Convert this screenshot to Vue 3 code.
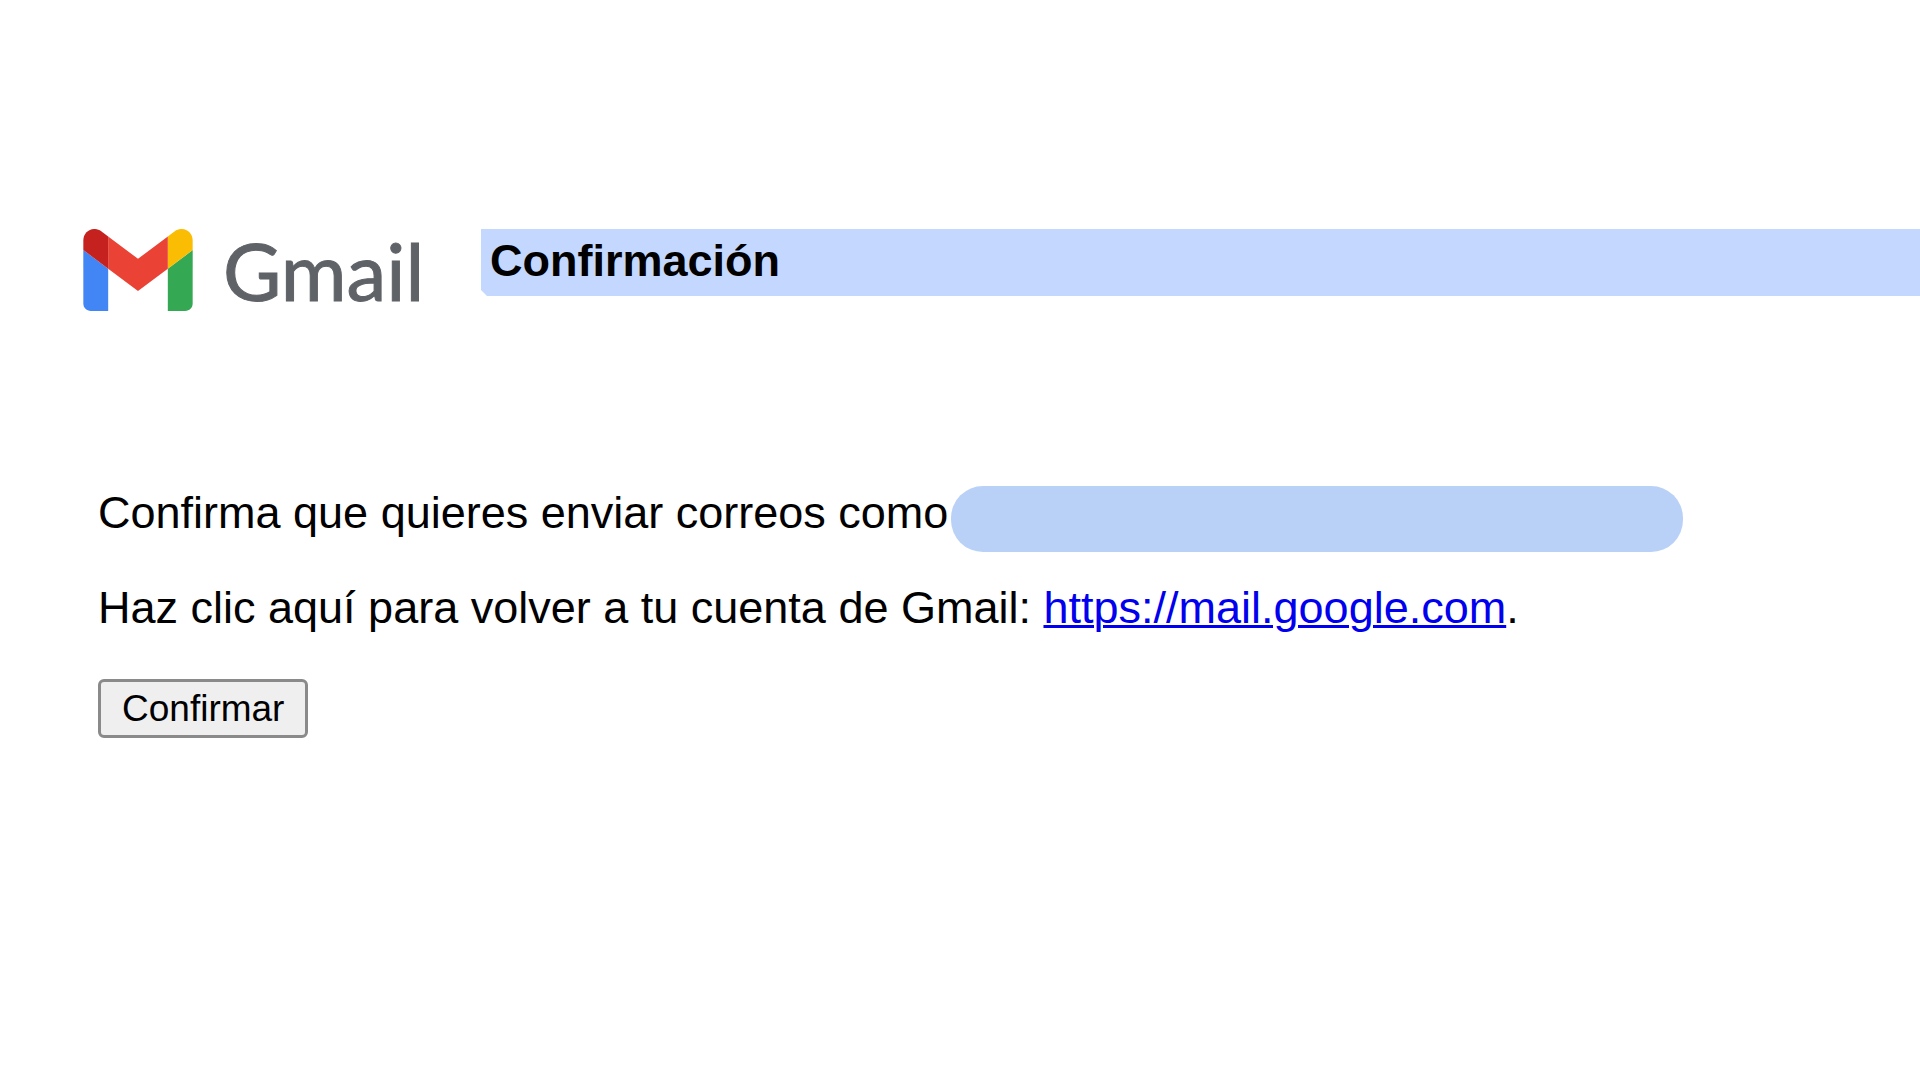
<script setup>
const mailUrl = 'https://mail.google.com'
</script>

<template>
  <main class="page">
    <header class="header">
      <div class="logo">
        <svg class="mark" viewBox="52 42 88 66" aria-hidden="true">
          <path fill="#4285f4" d="M58 108h14V74L52 59v43c0 3.32 2.69 6 6 6" />
          <path fill="#34a853" d="M120 108h14c3.32 0 6-2.69 6-6V59l-20 15" />
          <path fill="#fbbc04" d="M120 48v26l20-15v-8c0-7.42-8.47-11.65-14.4-7.2" />
          <path fill="#ea4335" d="M72 74V48l24 18 24-18v26L96 92" />
          <path fill="#c5221f" d="M52 51v8l20 15V48l-5.6-4.2c-5.94-4.45-14.4-.22-14.4 7.2" />
        </svg>
        <span class="wordmark">Gmail</span>
      </div>
      <h1 class="title">Confirmación</h1>
    </header>

    <form class="content" @submit.prevent>
      <p class="line">
        <span>Confirma que quieres enviar correos como</span>
        <span class="redacted"></span>
      </p>
      <p class="line">
        <span>Haz clic aquí para volver a tu cuenta de Gmail: <a :href="mailUrl">{{ mailUrl }}</a>.</span>
      </p>
      <button class="confirm" type="submit">Confirmar</button>
    </form>
  </main>
</template>

<style>
body {
  margin: 0;
  background: #fff;
}
</style>

<style scoped>
.page {
  padding-top: 229px;
  font-family: "Liberation Sans", Arial, sans-serif;
  font-size: 45px;
  color: #000;
}

.header {
  display: flex;
  align-items: flex-start;
  padding-left: 83px;
}

.logo {
  display: flex;
  flex: none;
  align-items: center;
  gap: 30px;
  width: 398px;
  height: 82px;
}

.mark {
  flex: none;
  width: 110px;
  height: 82px;
}

.wordmark {
  font-family: Lato, sans-serif;
  font-size: 80px;
  line-height: 82px;
  color: #5f6368;
  -webkit-text-stroke: 1px #5f6368;
}

.title {
  flex: 1;
  box-sizing: border-box;
  height: 67px;
  margin: 0;
  padding-left: 9px;
  background: #c3d7ff;
  clip-path: polygon(0 0, 100% 0, 100% 100%, 6px 100%, 0 calc(100% - 6px));
  font-size: 45px;
  font-weight: 700;
  line-height: 64px;
}

.content {
  display: flex;
  flex-direction: column;
  align-items: flex-start;
  padding: 175px 98px 0;
}

.line {
  display: flex;
  gap: 3px;
  align-self: stretch;
  height: 66px;
  margin: 0 0 29px;
  line-height: 54px;
}

.line a {
  color: #0000ee;
  text-decoration-thickness: 3px;
}

.redacted {
  flex: none;
  width: 732px;
  height: 66px;
  border-radius: 32px;
  background: #b9d1f7;
}

.confirm {
  height: 59px;
  margin-top: 3px;
  padding: 0 21px;
  border: 3px solid #8a8a8a;
  border-radius: 6px;
  background: #efefef;
  color: #000;
  font-family: inherit;
  font-size: 37px;
  line-height: 50px;
}
</style>
